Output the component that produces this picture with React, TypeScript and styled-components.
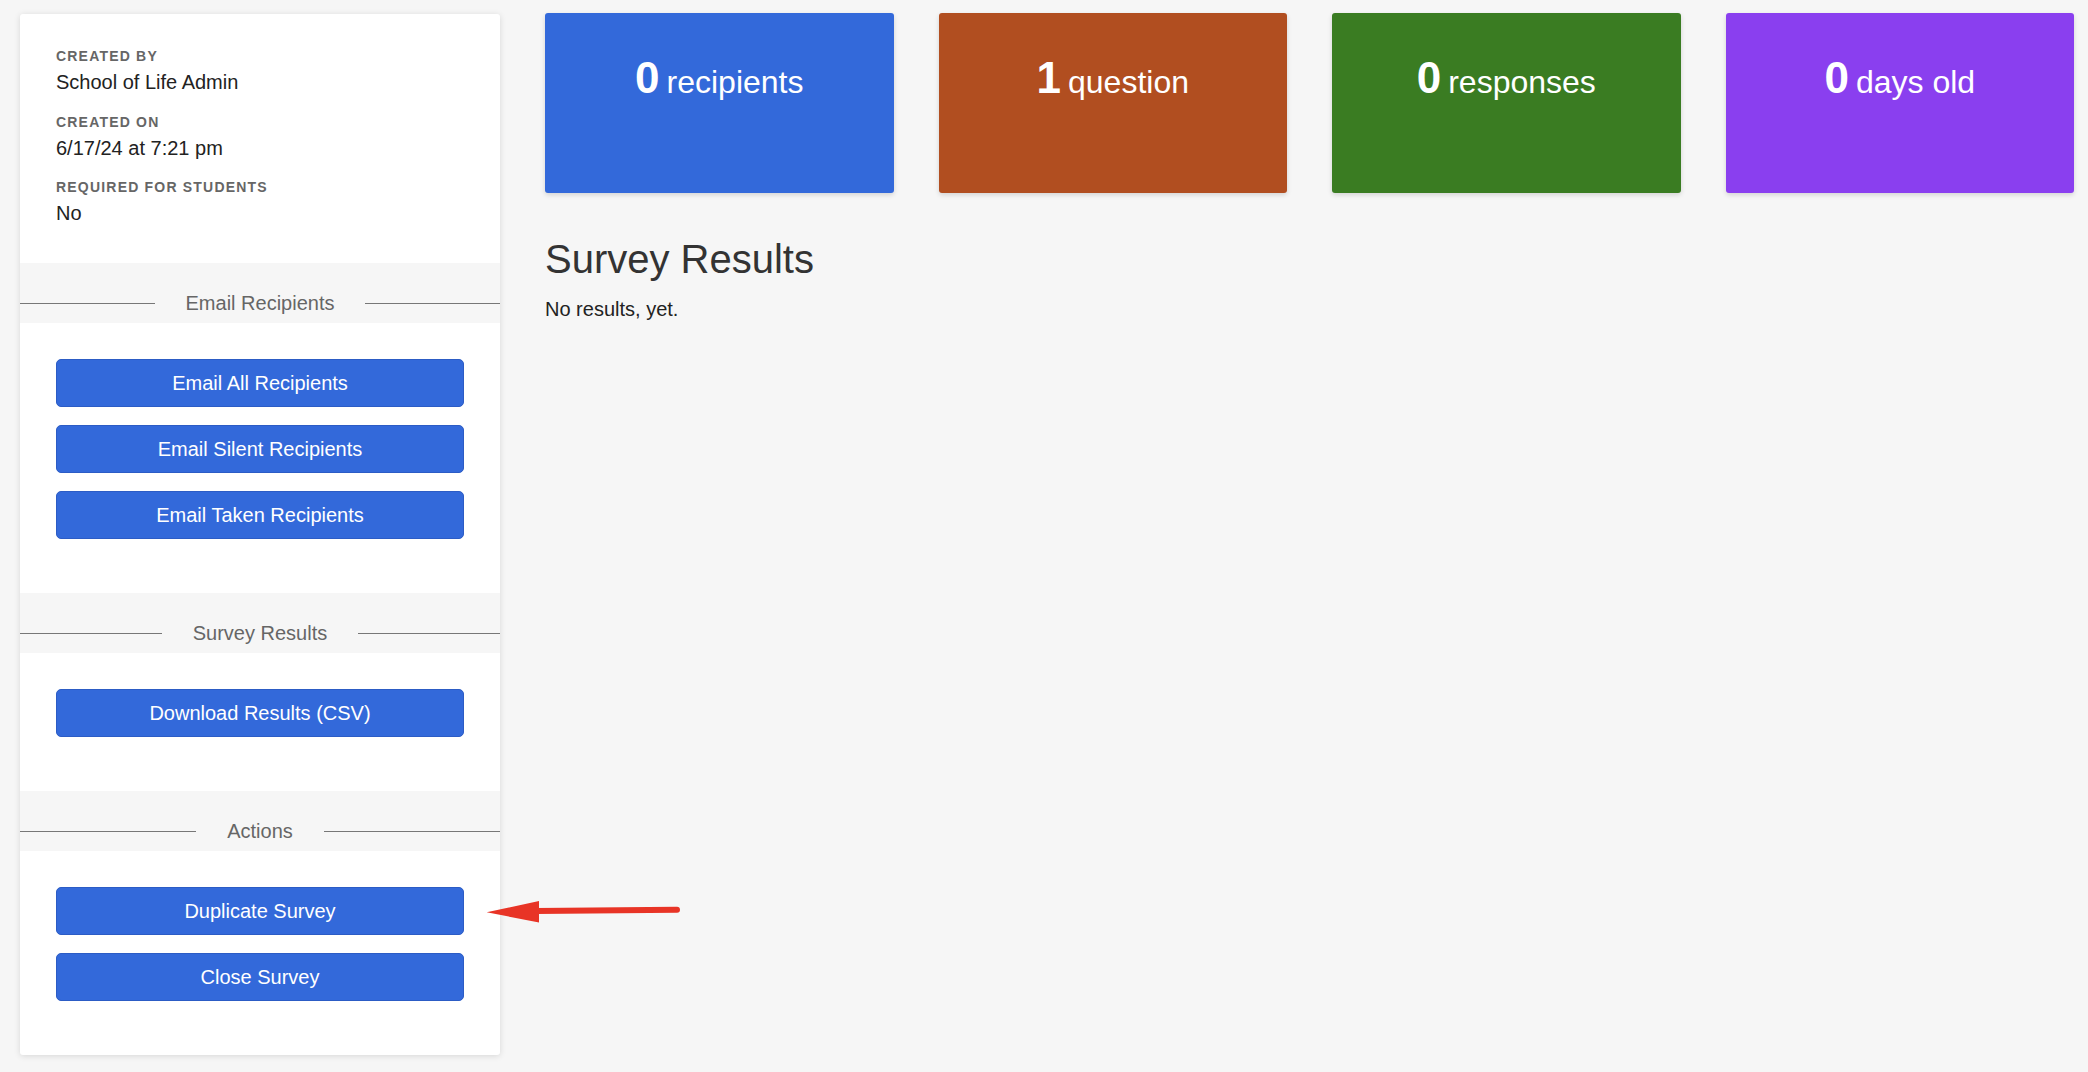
import React from 'react';
import styled, { createGlobalStyle } from 'styled-components';

const GlobalStyle = createGlobalStyle`
  html, body {
    margin: 0;
    padding: 0;
    background: #f6f6f6;
    font-family: "Liberation Sans", Arial, Helvetica, sans-serif;
    color: #222;
  }
  * { box-sizing: border-box; }
`;

const BLUE = '#3369da';

const stats = [
  { value: 0, label: 'recipients', color: BLUE },
  { value: 1, label: 'question', color: '#b14e20' },
  { value: 0, label: 'responses', color: '#3a7c22' },
  { value: 0, label: 'days old', color: '#8a3fef' },
];

const info = [
  { label: 'Created By', value: 'School of Life Admin' },
  { label: 'Created On', value: '6/17/24 at 7:21 pm' },
  { label: 'Required for Students', value: 'No' },
];

const sections = [
  { title: 'Email Recipients', buttons: ['Email All Recipients', 'Email Silent Recipients', 'Email Taken Recipients'] },
  { title: 'Survey Results', buttons: ['Download Results (CSV)'] },
  { title: 'Actions', buttons: ['Duplicate Survey', 'Close Survey'] },
];

const App = () => {
  return (
    <Page>
      <GlobalStyle />
      <Sidebar>
        <InfoSection>
          {info.map((item) => (
            <Field key={item.label}>
              <FieldLabel>{item.label}</FieldLabel>
              <FieldValue>{item.value}</FieldValue>
            </Field>
          ))}
        </InfoSection>
        {sections.map((section) => (
          <React.Fragment key={section.title}>
            <Divider>
              <DividerRow>
                <DividerLine />
                <DividerTitle>{section.title}</DividerTitle>
                <DividerLine />
              </DividerRow>
            </Divider>
            <ButtonSection>
              {section.buttons.map((label) => (
                <ActionButton key={label} type="button">
                  {label}
                </ActionButton>
              ))}
            </ButtonSection>
          </React.Fragment>
        ))}
      </Sidebar>

      <Main>
        <StatGrid>
          {stats.map((stat) => (
            <StatCard key={stat.label} $color={stat.color}>
              <StatNumber>{stat.value}</StatNumber>
              {stat.label}
            </StatCard>
          ))}
        </StatGrid>
        <Heading>Survey Results</Heading>
        <EmptyText>No results, yet.</EmptyText>
      </Main>

      {/* annotation arrow pointing at the Duplicate Survey button */}
      <Arrow width="205" height="35" viewBox="0 0 205 35">
        <path d="M56 16 L197 14.7" stroke="#e83426" strokeWidth="6" strokeLinecap="round" fill="none" />
        <polygon points="6.7,17.3 59,6 59,27.5" fill="#e83426" />
      </Arrow>
    </Page>
  );
};

const Page = styled.div`
  position: relative;
  display: flex;
  align-items: flex-start;
  gap: 45px;
  padding: 14px 14px 0 20px;
  min-height: 1072px;
`;

const Sidebar = styled.aside`
  width: 480px;
  flex-shrink: 0;
  background: #fff;
  border-radius: 3px;
  box-shadow: 0 1px 6px rgba(0, 0, 0, 0.13);
  overflow: hidden;
`;

const InfoSection = styled.div`
  padding: 33px 36px 37px;
`;

const Field = styled.div`
  & + & {
    margin-top: 17.5px;
  }
`;

const FieldLabel = styled.div`
  font-size: 14px;
  line-height: 18px;
  font-weight: 700;
  letter-spacing: 1.2px;
  text-transform: uppercase;
  color: #666;
  margin-bottom: 4px;
`;

const FieldValue = styled.div`
  font-size: 20px;
  line-height: 26px;
  color: #222;
`;

const Divider = styled.div`
  background: #f6f6f6;
  padding: 28px 0 8px;
`;

const DividerRow = styled.div`
  display: flex;
  align-items: center;
  height: 24px;
`;

const DividerLine = styled.div`
  flex: 1;
  height: 1px;
  background: #777;
`;

const DividerTitle = styled.span`
  margin: 0 31px;
  font-size: 20px;
  line-height: 24px;
  color: #666;
`;

const ButtonSection = styled.div`
  padding: 36px 36px 36px;
`;

const ActionButton = styled.button`
  display: block;
  width: 100%;
  height: 48px;
  margin: 0 0 18px;
  padding: 0;
  border: 1px solid #2c5cc5;
  border-radius: 5px;
  background: ${BLUE};
  color: #fff;
  font-family: inherit;
  font-size: 20px;
  line-height: 46px;
  text-align: center;
  cursor: pointer;
`;

const Main = styled.main`
  flex: 1;
  min-width: 0;
`;

const StatGrid = styled.div`
  display: grid;
  grid-template-columns: repeat(4, 1fr);
  gap: 45px;
  margin-top: -1px;
`;

const StatCard = styled.div<{ $color: string }>`
  height: 180px;
  padding-top: 40px;
  border-radius: 3px;
  background: ${(p) => p.$color};
  box-shadow: 0 2px 5px rgba(0, 0, 0, 0.14);
  color: #fff;
  text-align: center;
  font-size: 32px;
  line-height: 50px;
`;

const StatNumber = styled.span`
  font-size: 44px;
  font-weight: 700;
  margin-right: 7px;
`;

const Heading = styled.h2`
  margin: 42px 0 13px;
  font-size: 40px;
  line-height: 48px;
  font-weight: 400;
  color: #333;
`;

const EmptyText = styled.p`
  margin: 0;
  font-size: 20px;
  line-height: 26px;
  color: #222;
`;

const Arrow = styled.svg`
  position: absolute;
  left: 480px;
  top: 895px;
  pointer-events: none;
`;

export default App;
